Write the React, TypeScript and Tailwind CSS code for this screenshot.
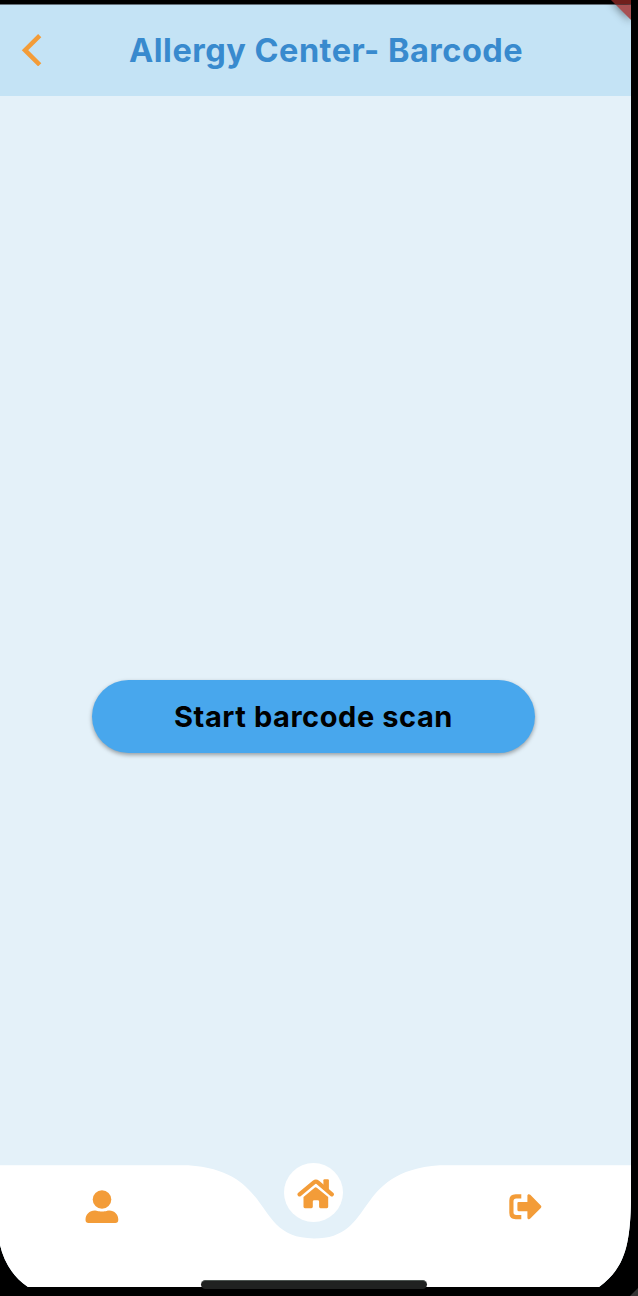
function BackIcon() {
  return (
    <svg className="block h-8 w-[21px]" viewBox="0 0 21 32" fill="none">
      <path d="M18.7 1.6L4 16.2L18.7 30.8" stroke="#f39c38" strokeWidth="4.5" />
    </svg>
  );
}

function UserIcon() {
  return (
    <svg className="block h-[33px] w-[34px]" viewBox="0 0 34 33" fill="#f39c38">
      <circle cx="17" cy="9.5" r="9.3" />
      <path d="M9.8 20.6C11.5 20.6 12.7 21.6 17 21.6C21.3 21.6 22.5 20.6 24.2 20.6C29.5 20.6 33.3 24.7 33.3 29.8C33.3 32 32.2 33 30.3 33H3.6C1.7 33 .5 32 .5 29.8C.5 24.7 4.4 20.6 9.8 20.6Z" />
    </svg>
  );
}

function HomeIcon() {
  return (
    <svg className="block h-[30px] w-[38px]" viewBox="0 0 38 30" fill="#f39c38">
      <path d="M2.6 15.3L17 3.3Q18.9 1.8 20.8 3.3L34.8 15.3" fill="none" stroke="#f39c38" strokeWidth="4.2" strokeLinecap="round" />
      <path d="M26.4 1.3Q26.4 .2 27.5 .2H30.8Q31.9 .2 31.9 1.3V12.5L26.4 7.8Z" />
      <path d="M6.5 17.9L17.6 8.7Q18.7 7.9 19.8 8.7L31.2 17.9V27.8Q31.2 29.2 29.8 29.2H23.5Q22.1 29.2 22.1 27.8V22.6Q22.1 21.2 20.7 21.2H17.2Q15.8 21.2 15.8 22.6V27.8Q15.8 29.2 14.4 29.2H7.9Q6.5 29.2 6.5 27.8Z" />
    </svg>
  );
}

function LogoutIcon() {
  return (
    <svg className="block h-[26px] w-[33px]" viewBox="0 0 33 26" fill="#f39c38">
      <path d="M12.3 .3V4.6H7.2Q4.5 4.6 4.5 7.2V18.3Q4.5 20.9 7.2 20.9H12.3V25.2H6.7Q.3 25.2 .3 18.8V6.6Q.3 .3 6.7 .3Z" />
      <path d="M9.5 8.1H18.4V1.7C18.4 .2 20.2 -.3 21.3 .8L31.8 11.5Q32.9 12.7 31.8 13.9L21.3 24.6C20.2 25.7 18.4 25.2 18.4 23.7V17.2H9.5Q8.4 17.2 8.4 16.1V9.2Q8.4 8.1 9.5 8.1Z" />
    </svg>
  );
}

export default function App() {
  return (
    <div className="relative h-[1296px] w-[638px] overflow-hidden bg-black pt-1 font-['Inter','Liberation_Sans',sans-serif]">
      <div className="flex h-[1283px] w-[631px] flex-col bg-[#e4f1f9]">
        <header className="flex h-[92px] shrink-0 items-center border-t border-[#647079] bg-[#c4e3f5] pl-[21px]">
          <button className="-mt-px" aria-label="Back">
            <BackIcon />
          </button>
          <h1 className="ml-[87px] whitespace-nowrap text-[32.5px] font-bold leading-10 tracking-[0.5px] text-[#388ace]">
            Allergy Center- Barcode
          </h1>
        </header>

        <main className="flex flex-1 flex-col items-start pt-[584px] pl-[92px]">
          <button className="flex h-[73px] w-[443px] items-center justify-center rounded-full bg-[#48a7ed] shadow-[0_2px_4px_rgba(0,0,0,0.35)]">
            <span className="whitespace-nowrap text-[29px] font-bold tracking-[0.57px] text-black">Start barcode scan</span>
          </button>
        </main>

        <nav className="relative h-[122px] shrink-0">
          <svg className="absolute inset-0" width="631" height="122" viewBox="0 0 631 122">
            <path d="M0 80C4 97 13 112 28 122H0Z" fill="#000" />
            <path d="M631 36C630 80 625 103 599 122H631Z" fill="#000" />
            <path
              d="M0 .2H188.4C276.4 6.3 251.2 73.5 314 73.5C376.8 73.5 351.6 6.3 439.6 .2H631V36C630 80 625 103 599 122H28C13 112 4 97 0 80Z"
              fill="#fff"
            />
          </svg>
          <div className="relative flex items-start">
            <button className="mt-[25px] ml-[85px]" aria-label="Profile">
              <UserIcon />
            </button>
            <button className="-mt-[2px] ml-[165px] flex h-[59px] w-[59px] items-center justify-center rounded-full bg-white pl-1 pt-[3px]" aria-label="Home">
              <HomeIcon />
            </button>
            <button className="mt-[29px] ml-[165.5px]" aria-label="Log out">
              <LogoutIcon />
            </button>
          </div>
        </nav>
      </div>
      <div className="absolute top-[1280px] left-[201px] h-[9px] w-[226px] rounded-[5px] border-t border-[#4c5551] bg-[#202221]" />
      <svg className="absolute top-0 left-[571px]" width="60" height="60" viewBox="0 0 60 60">
        <defs>
          <filter id="ribbon-shadow" x="-100%" y="-100%" width="300%" height="300%">
            <feGaussianBlur stdDeviation="5" />
          </filter>
        </defs>
        <path d="M40 0H60V21Z" fill="#000" opacity=".55" filter="url(#ribbon-shadow)" />
        <path d="M40 0L60 20V5H45Z" fill="#a85052" />
        <path d="M40 0H60V4.5H44.5Z" fill="#711f1c" />
      </svg>
      <svg className="absolute right-0 bottom-0" width="8" height="8" viewBox="0 0 8 8">
        <path d="M8 0V8H0Z" fill="#353535" />
      </svg>
    </div>
  );
}
